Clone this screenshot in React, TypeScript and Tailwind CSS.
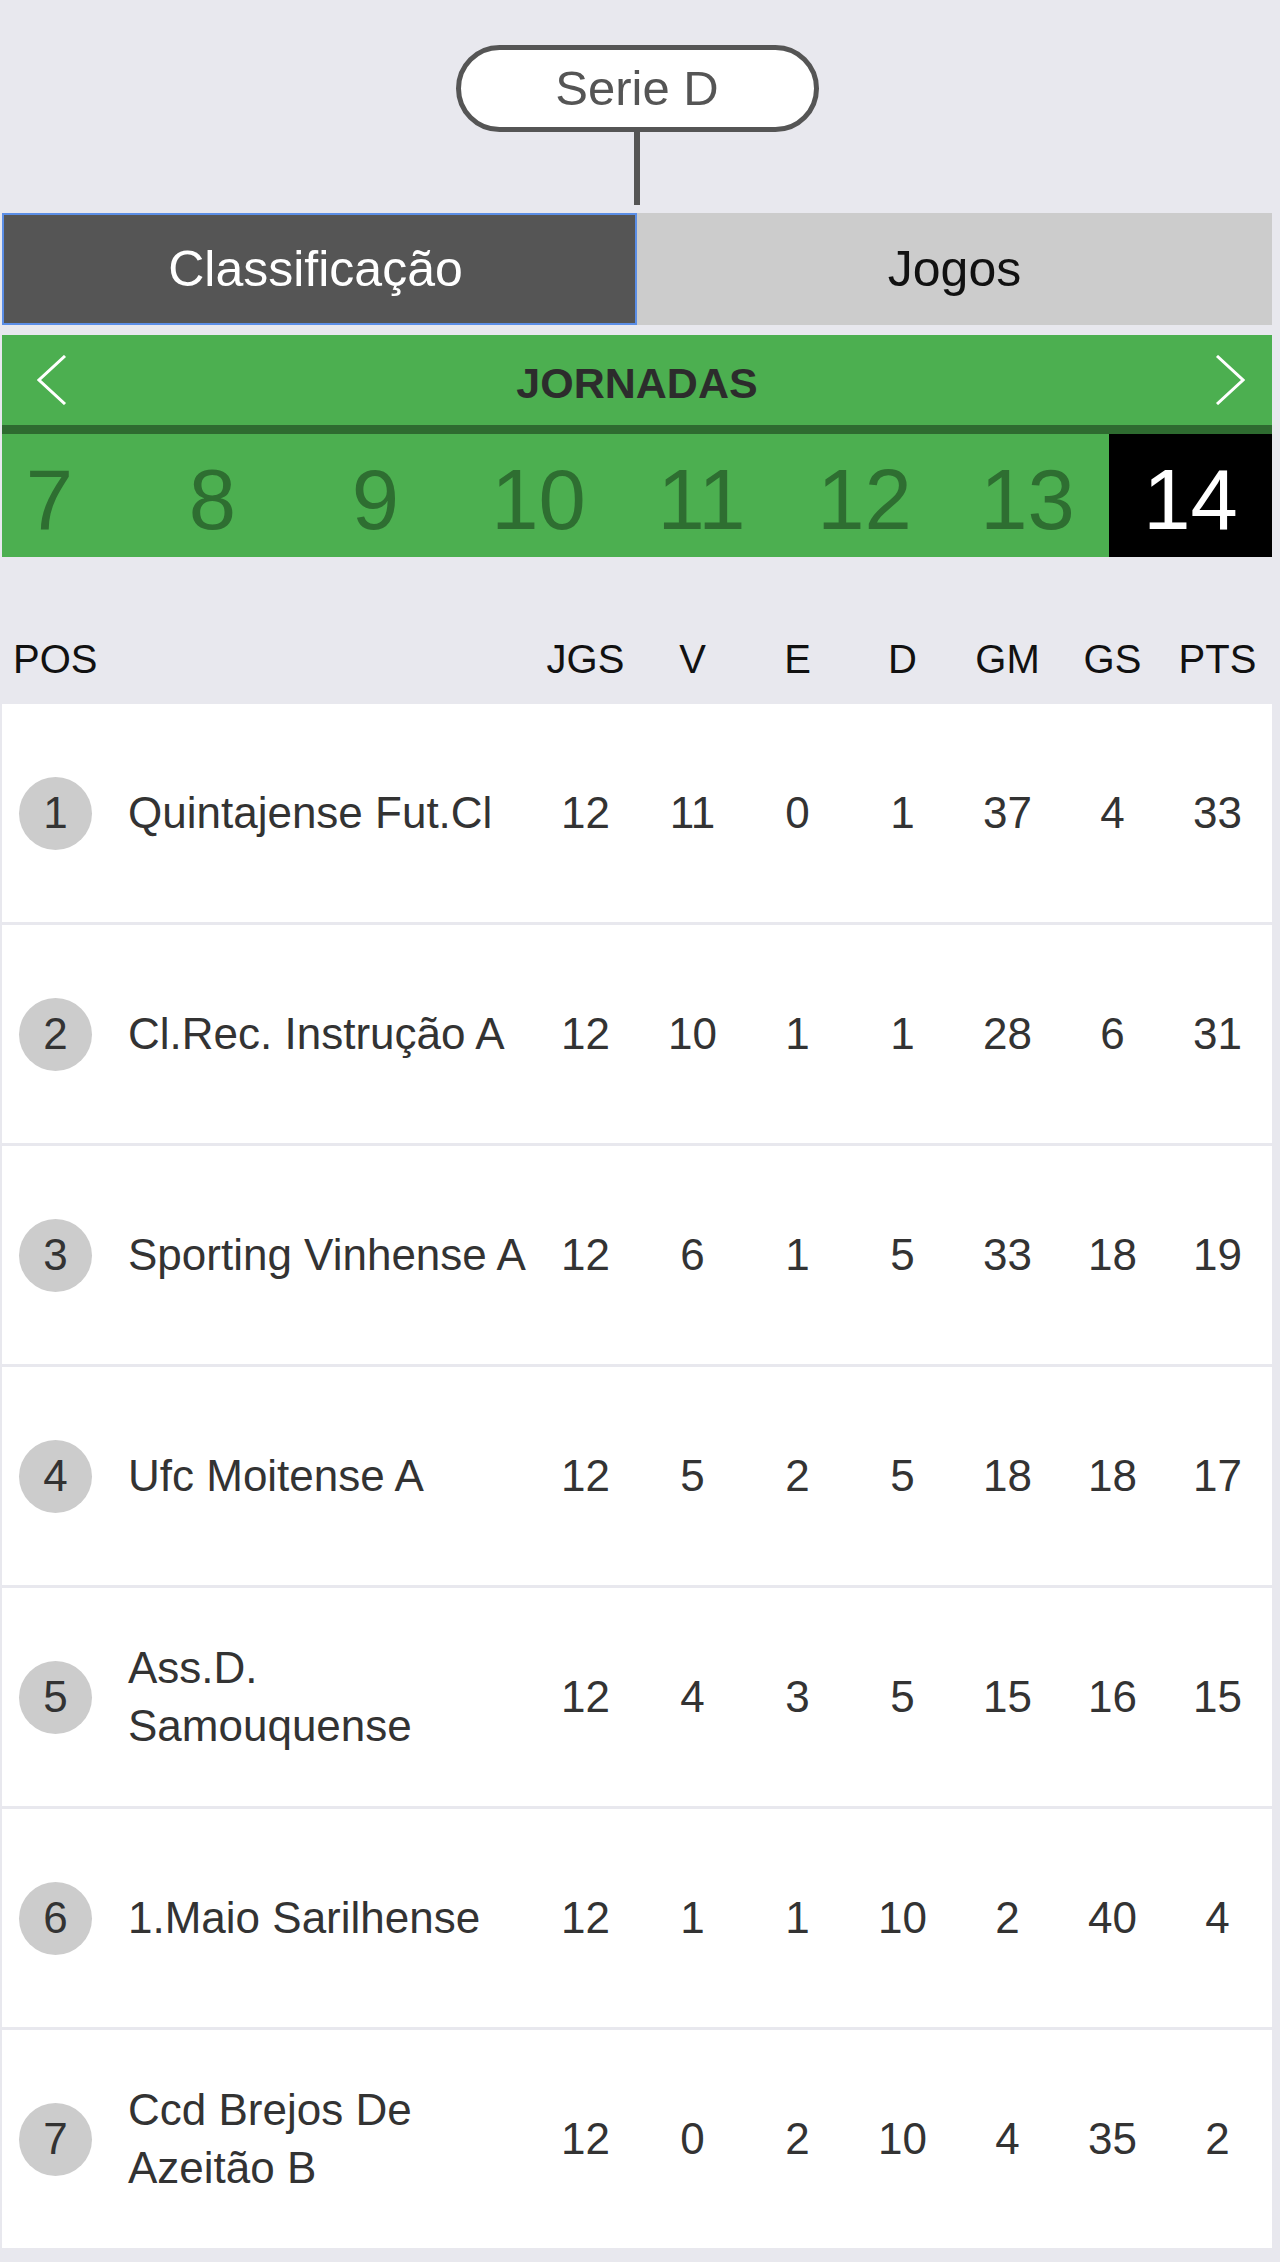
import React from 'react';

const teams = [
  { pos: 1, name: "Quintajense Fut.Cl", stats: [12, 11, 0, 1, 37, 4, 33] },
  { pos: 2, name: "Cl.Rec. Instrução A", stats: [12, 10, 1, 1, 28, 6, 31] },
  { pos: 3, name: "Sporting Vinhense A", stats: [12, 6, 1, 5, 33, 18, 19] },
  { pos: 4, name: "Ufc Moitense A", stats: [12, 5, 2, 5, 18, 18, 17] },
  { pos: 5, name: "Ass.D. Samouquense", stats: [12, 4, 3, 5, 15, 16, 15] },
  { pos: 6, name: "1.Maio Sarilhense", stats: [12, 1, 1, 10, 2, 40, 4] },
  { pos: 7, name: "Ccd Brejos De Azeitão B", stats: [12, 0, 2, 10, 4, 35, 2] },
];

const columns = ["JGS", "V", "E", "D", "GM", "GS", "PTS"];
const rounds = [7, 8, 9, 10, 11, 12, 13, 14];

const Chevron = ({ dir }: { dir: 'left' | 'right' }) => (
  <svg width="30" height="50" viewBox="0 0 30 50" fill="none">
    <polyline
      points={dir === 'left' ? "28,1 2,25 28,49" : "2,1 28,25 2,49"}
      stroke="white"
      strokeWidth="3"
      strokeLinejoin="miter"
    />
  </svg>
);

const App = () => {
  return (
    <div className="min-h-screen bg-[#e8e8ee] pb-[13px] font-[family-name:Liberation_Sans,Arial,sans-serif]">
      <div className="ml-[2px] w-[1270px]">
        {/* Serie pill */}
        <div className="flex flex-col items-center pt-[45px]">
          <div className="flex h-[87px] w-[363px] items-center justify-center rounded-full border-[5px] border-[#555] bg-white text-[49px] text-[#555]">
            Serie D
          </div>
          <div className="h-[73px] w-[6px] bg-[#555]"></div>
        </div>

        {/* Tabs */}
        <div className="mt-[8px] flex h-[112px]">
          <div className="flex w-1/2 items-center justify-center border-2 border-[#5b8ee6] bg-[#555] pr-[8px] text-[50px] text-white">
            Classificação
          </div>
          <div className="flex w-1/2 items-center justify-center bg-[#cccccc] text-[50px] text-[#111]">
            Jogos
          </div>
        </div>

        {/* Jornadas */}
        <div className="mt-[10px] bg-[#4caf50]">
          <div className="grid h-[90px] grid-cols-[1fr_auto_1fr] items-center">
            <div className="ml-[35px] justify-self-start">
              <Chevron dir="left" />
            </div>
            <div className="pt-[7px] text-[43px] font-bold text-[#2c2c2c]">JORNADAS</div>
            <div className="mr-[27px] justify-self-end">
              <Chevron dir="right" />
            </div>
          </div>
          <div className="h-[9px] bg-[#2e6b30]"></div>
          <div className="flex h-[123px] justify-end overflow-hidden">
            {rounds.map((r) => (
              <div
                key={r}
                className={
                  r === 14
                    ? "flex w-[163px] shrink-0 items-center justify-center bg-black pt-[8px] text-[85px] leading-none text-white"
                    : "flex w-[163px] shrink-0 items-center justify-center pt-[8px] text-[85px] leading-none text-[#2e6e31]"
                }
              >
                {r}
              </div>
            ))}
          </div>
        </div>

        {/* Table header */}
        <div className="mt-[56px] flex h-[91px] items-center text-[40px] text-[#111]">
          <div className="w-[529px] pl-[11px]">POS</div>
          {columns.map((c, i) => (
            <div key={c} className={i === 0 ? "w-[109px] text-center" : "w-[105px] text-center"}>
              {c}
            </div>
          ))}
        </div>

        {/* Rows */}
        <div className="flex flex-col gap-[3px]">
          {teams.map((t) => (
            <div key={t.pos} className="flex h-[218px] items-center bg-white text-[44px] text-[#333]">
              <div className="w-[126px]">
                <div className="ml-[17px] flex h-[73px] w-[73px] items-center justify-center rounded-full bg-[#cccccc]">
                  {t.pos}
                </div>
              </div>
              <div className="w-[403px] leading-[58px]">{t.name}</div>
              {t.stats.map((s, i) => (
                <div key={i} className={i === 0 ? "w-[109px] text-center" : "w-[105px] text-center"}>
                  {s}
                </div>
              ))}
            </div>
          ))}
        </div>
      </div>
    </div>
  );
};

export default App;
